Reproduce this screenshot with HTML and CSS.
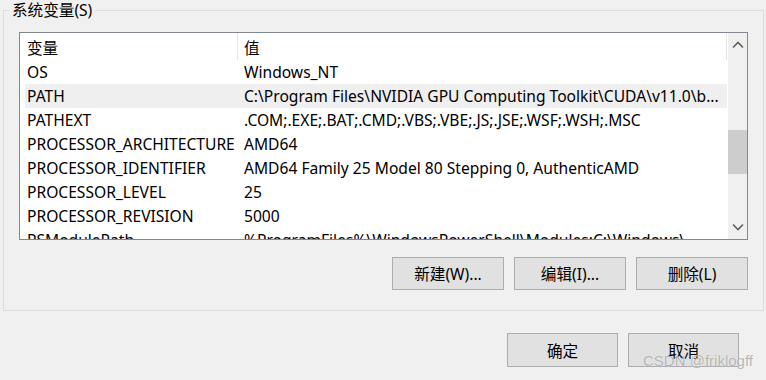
FILE: index.html
```html
<!DOCTYPE html>
<html lang="zh-CN">
<head>
    <meta charset="UTF-8">
    <title>系统变量</title>
    <link rel="stylesheet" href="styles.css">
</head>
<body>
    <div class="dialog">
        <fieldset class="group">
            <legend class="group-title">系统变量(S)</legend>
            <div class="list-box">
                <div class="list-view">
                    <div class="list-row list-head">
                        <div class="cell cell-name">变量</div>
                        <div class="cell cell-value">值</div>
                    </div>
                    <div class="list-body">
                        <div class="list-row"><div class="cell cell-name">OS</div><div class="cell cell-value">Windows_NT</div></div>
                        <div class="list-row hover"><div class="cell cell-name">PATH</div><div class="cell cell-value">C:\Program Files\NVIDIA GPU Computing Toolkit\CUDA\v11.0\b...</div></div>
                        <div class="list-row"><div class="cell cell-name">PATHEXT</div><div class="cell cell-value">.COM;.EXE;.BAT;.CMD;.VBS;.VBE;.JS;.JSE;.WSF;.WSH;.MSC</div></div>
                        <div class="list-row"><div class="cell cell-name">PROCESSOR_ARCHITECTURE</div><div class="cell cell-value">AMD64</div></div>
                        <div class="list-row"><div class="cell cell-name">PROCESSOR_IDENTIFIER</div><div class="cell cell-value">AMD64 Family 25 Model 80 Stepping 0, AuthenticAMD</div></div>
                        <div class="list-row"><div class="cell cell-name">PROCESSOR_LEVEL</div><div class="cell cell-value">25</div></div>
                        <div class="list-row"><div class="cell cell-name">PROCESSOR_REVISION</div><div class="cell cell-value">5000</div></div>
                        <div class="list-row"><div class="cell cell-name">PSModulePath</div><div class="cell cell-value">%ProgramFiles%\WindowsPowerShell\Modules;C:\Windows\...</div></div>
                    </div>
                </div>
                <div class="scrollbar">
                    <div class="scroll-arrow">
                        <svg width="12" height="8" viewBox="0 0 12 8"><path d="M1 6.5 L6 1.5 L11 6.5" fill="none" stroke="#606060" stroke-width="1.6"/></svg>
                    </div>
                    <div class="scroll-track">
                        <div class="scroll-thumb"></div>
                    </div>
                    <div class="scroll-arrow">
                        <svg width="12" height="8" viewBox="0 0 12 8"><path d="M1 1.5 L6 6.5 L11 1.5" fill="none" stroke="#606060" stroke-width="1.6"/></svg>
                    </div>
                </div>
            </div>
            <div class="btn-row">
                <button class="win-btn">新建(W)...</button>
                <button class="win-btn">编辑(I)...</button>
                <button class="win-btn">删除(L)</button>
            </div>
        </fieldset>
        <div class="btn-row footer">
            <button class="win-btn">确定</button>
            <button class="win-btn">取消</button>
        </div>
        <div class="watermark">CSDN @friklogff</div>
    </div>
</body>
</html>
```

FILE: styles.css
```css
body {
    margin: 0;
    background: #f0f0f0;
    font-family: "Noto Sans", "Noto Sans CJK SC", sans-serif;
    font-size: 15.6px;
    color: #000;
}
.dialog {
    position: relative;
    width: 766px;
    height: 380px;
}
.group {
    margin: 0 2px 0 3px;
    padding: 12px 15px 20px 15px;
    border: 1px solid #dcdcdc;
}
.group-title {
    margin-left: -10px;
    padding: 0 3px;
    line-height: 20px;
}
.list-box {
    display: flex;
    height: 206px;
    border: 1px solid #828790;
    background: #fff;
    overflow: hidden;
}
.list-view {
    flex: 1;
    overflow: hidden;
    padding-left: 5px;
}
.list-row {
    display: flex;
    height: 24px;
    align-items: center;
    white-space: nowrap;
}
.list-head {
    height: 27px;
}
.list-row.hover {
    background: #efefef;
}
.cell {
    overflow: hidden;
}
.cell-name {
    width: 211px;
    padding-left: 2px;
}
.cell-value {
    flex: 1;
    padding-left: 6px;
}
.list-head .cell {
    height: 27px;
    line-height: 30px;
    border-right: 1px solid #e5e5e5;
}
.list-head .cell-name {
    width: 210px;
}
.scrollbar {
    width: 19px;
    background: #f0f0f0;
    display: flex;
    flex-direction: column;
    border-left: 1px solid #fff;
}
.scroll-arrow {
    height: 24px;
    display: flex;
    align-items: center;
    justify-content: center;
}
.scroll-track {
    flex: 1;
    padding-top: 73px;
}
.scroll-thumb {
    height: 44px;
    background: #cdcdcd;
}
.btn-row {
    display: flex;
    justify-content: flex-end;
    gap: 10px;
    margin-top: 17px;
}
.win-btn {
    width: 112px;
    height: 33px;
    background: #e1e1e1;
    border: 1px solid #adadad;
    font-family: "Noto Sans", "Noto Sans CJK SC", sans-serif;
    font-size: 15.6px;
    color: #000;
    padding: 0;
}
.footer {
    margin-top: 22px;
    margin-right: 27px;
}
.footer .win-btn {
    width: 111px;
    height: 34px;
}
.watermark {
    position: absolute;
    left: 643px;
    top: 352px;
    font-family: "Liberation Sans", sans-serif;
    font-size: 15px;
    color: rgba(120, 120, 120, 0.55);
    text-shadow: 0 0 1px #fff;
}
```
